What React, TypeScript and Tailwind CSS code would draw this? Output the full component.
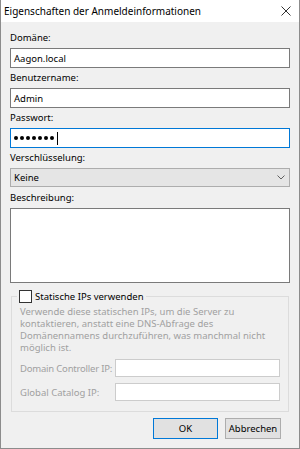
export default function App() {
  const dots = [0, 1, 2, 3, 4, 5, 6];
  return (
    <div className="w-[300px] h-[449px] flex flex-col bg-[#f0f0f0] border-x border-b border-[#8c8c8c] font-['Noto_Sans',sans-serif] text-[9.5px] text-black leading-[15px]">
      <div className="h-[22px] shrink-0 bg-white flex items-center justify-between pl-[3px] pr-[8px]">
        <span className="text-[10px]">Eigenschaften der Anmeldeinformationen</span>
        <svg width="10" height="10" viewBox="0 0 10 10">
          <path d="M0.5 0.5L9.5 9.5M9.5 0.5L0.5 9.5" stroke="#333" strokeWidth="1" fill="none" />
        </svg>
      </div>
      <div className="flex flex-col px-[9px] pt-[8px]">
        <div className="h-[15px]">Domäne:</div>
        <div className="mt-[3px] h-[20px] border border-[#7a7a7a] bg-white flex items-center px-[3px]">Aagon.local</div>
        <div className="mt-[2px] h-[15px]">Benutzername:</div>
        <div className="mt-[3px] h-[20px] border border-[#7a7a7a] bg-white flex items-center px-[3px]">Admin</div>
        <div className="mt-[2px] h-[15px]">Passwort:</div>
        <div className="mt-[3px] h-[20px] border border-[#0078d7] bg-white flex items-center px-[3px] gap-[2px]">
          {dots.map((d) => (
            <span key={d} className="w-[4px] h-[4px] rounded-full bg-black" />
          ))}
          <span className="w-[1px] h-[13px] bg-black ml-[1px]" />
        </div>
        <div className="mt-[2px] h-[15px]">Verschlüsselung:</div>
        <div className="mt-[3px] h-[19px] border border-[#adadad] bg-[#e5e5e5] flex items-center justify-between pl-[3px] pr-[4px]">
          <span>Keine</span>
          <svg width="8" height="5" viewBox="0 0 8 5">
            <path d="M0.5 0.5L4 4L7.5 0.5" stroke="#606060" strokeWidth="1" fill="none" />
          </svg>
        </div>
        <div className="mt-[3px] h-[15px]">Beschreibung:</div>
        <div className="mt-[3px] h-[75px] border border-[#7a7a7a] bg-white" />
        <fieldset className="mt-[7px] mx-[1px] border border-[#dcdcdc] px-[8px] pb-[10px] flex flex-col">
          <legend className="-ml-[3px] px-[2px] flex items-center gap-[3px] h-[13px]">
            <span className="w-[13px] h-[13px] border border-[#333333] bg-white" />
            <span>Statische IPs verwenden</span>
          </legend>
          <div className="mt-[3px] text-[#a0a0a0] leading-[12px]">
            Verwende diese statischen IPs, um die Server zu kontaktieren, anstatt eine DNS-Abfrage des Domänennamens durchzuführen, was manchmal nicht möglich ist.
          </div>
          <div className="mt-[5px] flex items-center h-[18px]">
            <span className="w-[95px] text-[#a0a0a0] whitespace-nowrap tracking-[-0.2px]">Domain Controller IP:</span>
            <div className="flex-1 h-[18px] border border-[#cccccc] bg-white" />
          </div>
          <div className="mt-[6px] flex items-center h-[18px]">
            <span className="w-[95px] text-[#a0a0a0] whitespace-nowrap">Global Catalog IP:</span>
            <div className="flex-1 h-[18px] border border-[#cccccc] bg-white" />
          </div>
        </fieldset>
        <div className="mt-[6px] flex justify-end gap-[7px] mr-[9px]">
          <div className="w-[65px] h-[21px] border border-[#0078d7] bg-[#e1e1e1] flex items-center justify-center">OK</div>
          <div className="w-[56px] h-[21px] border border-[#adadad] bg-[#e1e1e1] flex items-center justify-center">Abbrechen</div>
        </div>
      </div>
    </div>
  );
}
